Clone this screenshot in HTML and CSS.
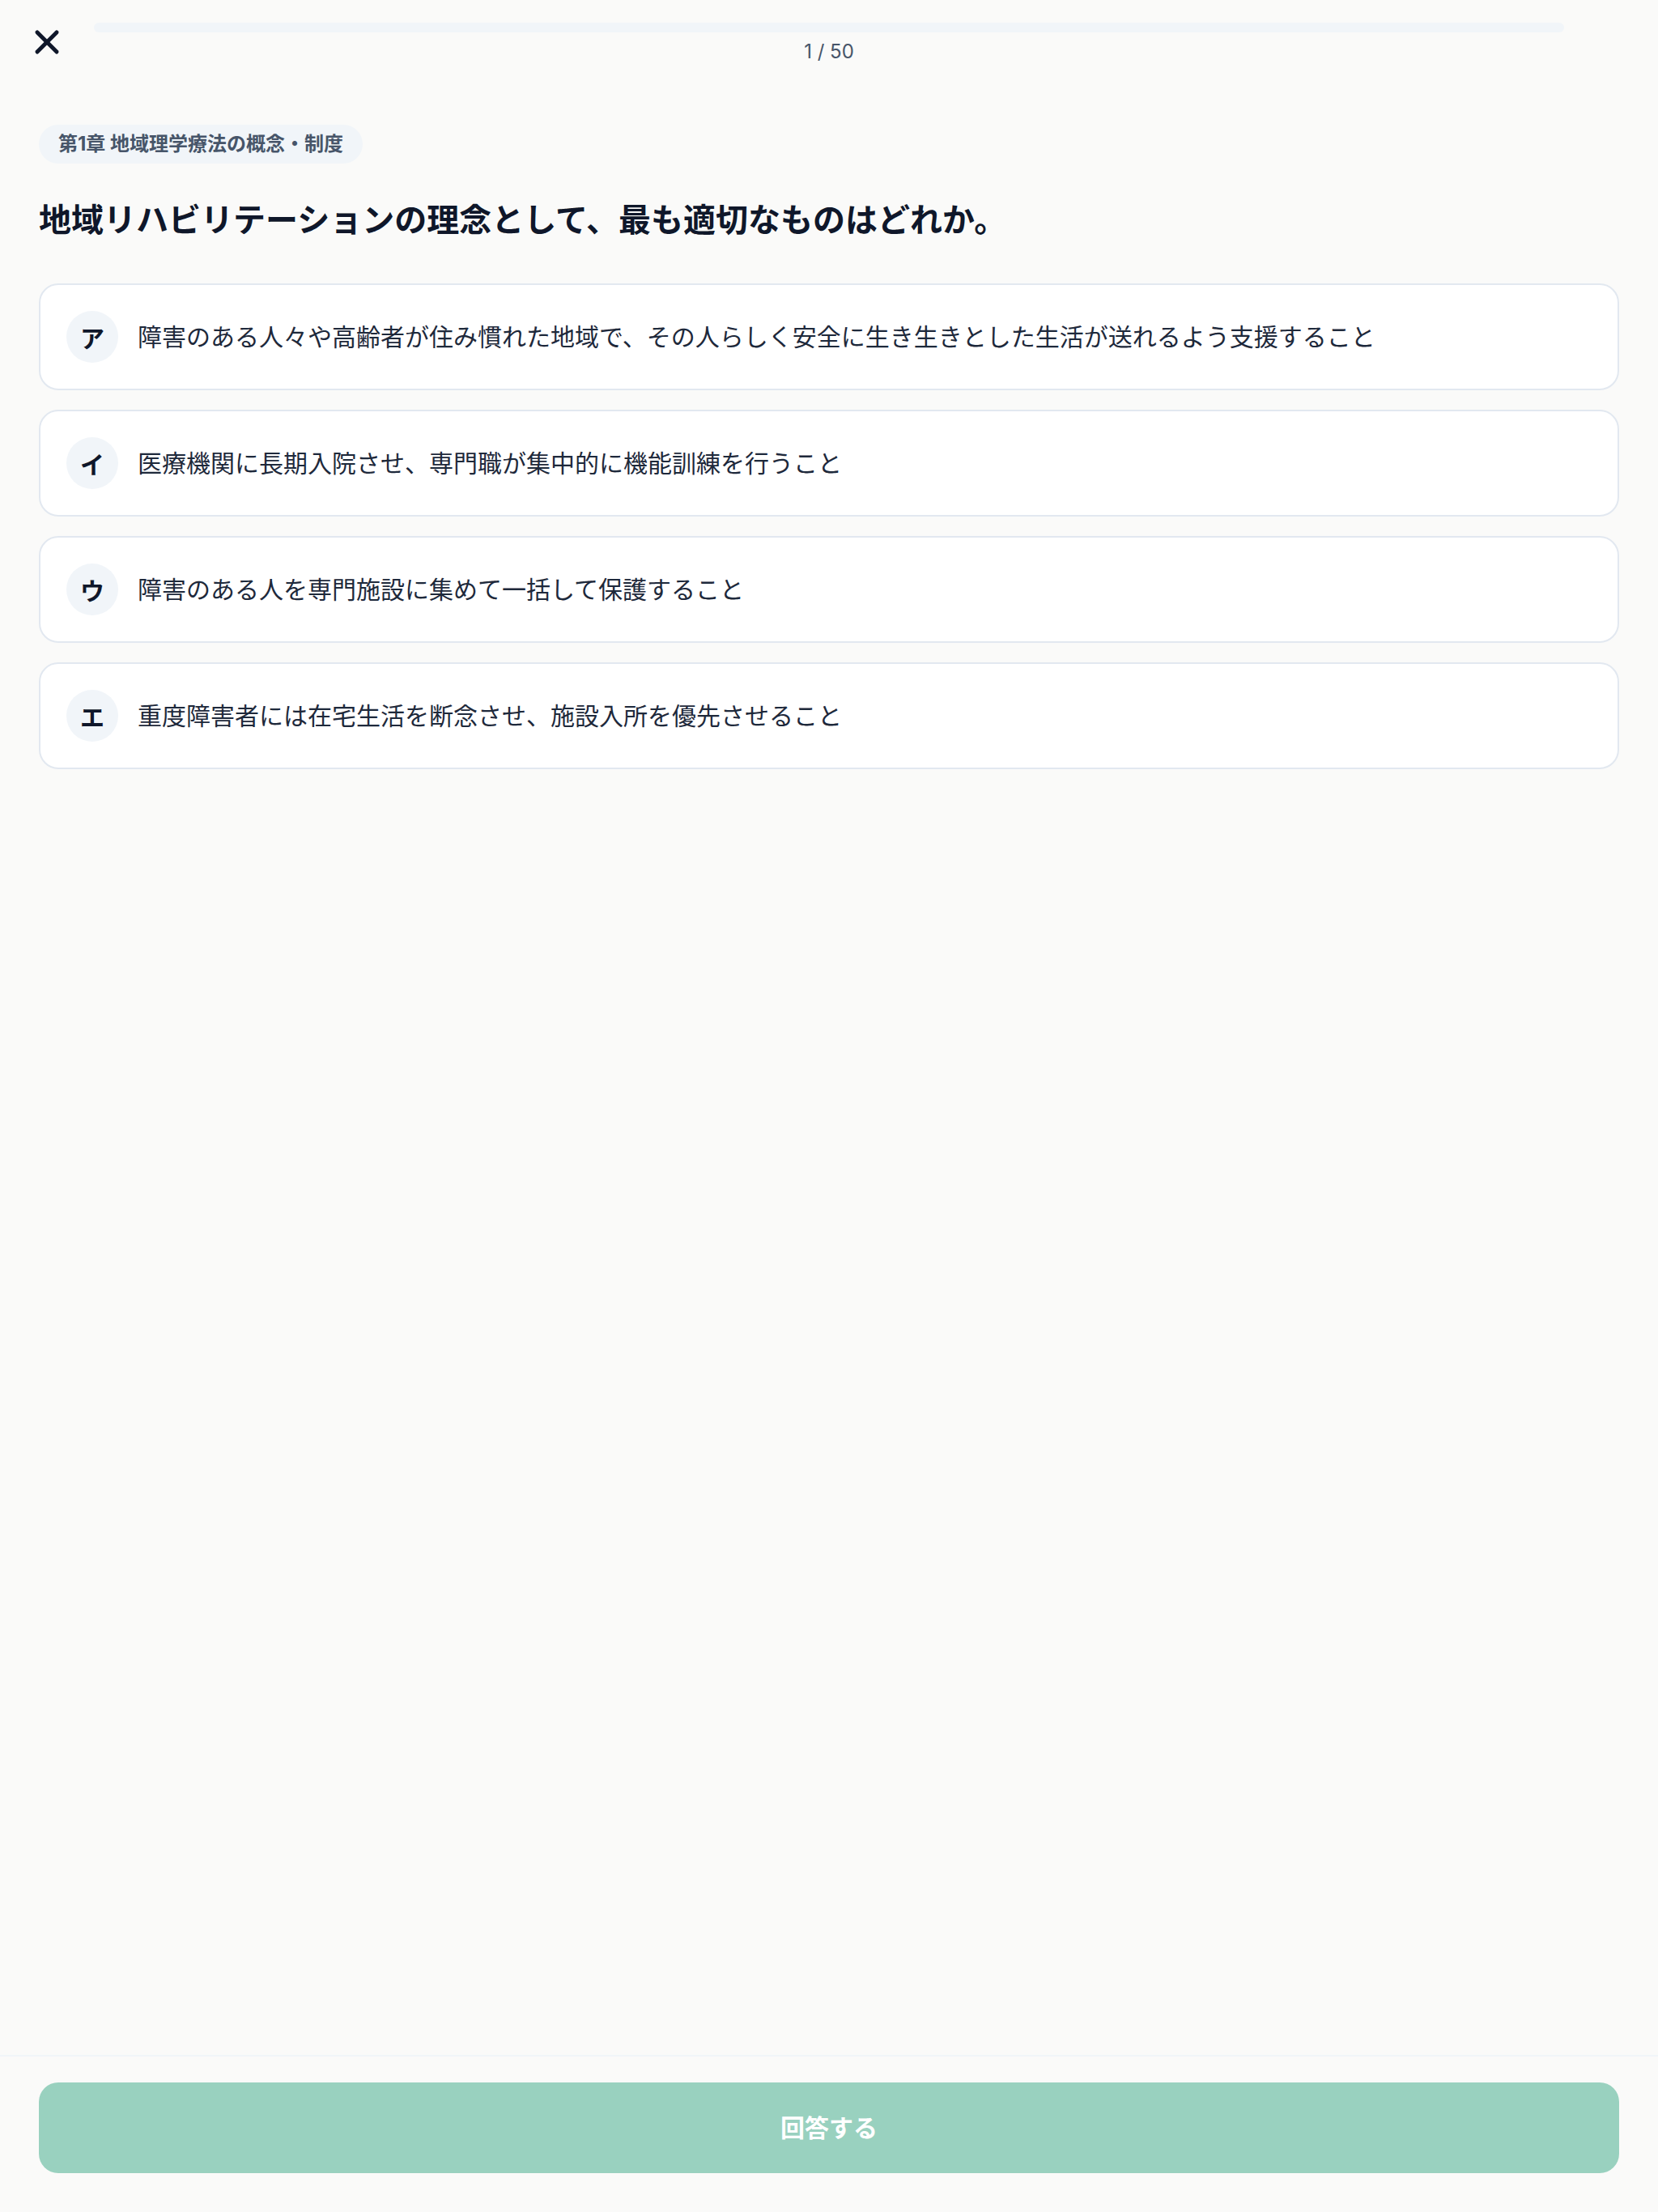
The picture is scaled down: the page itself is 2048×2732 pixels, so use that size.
FILE: index.html
```html
<!DOCTYPE html>
<html>
<head>
    <meta charset="utf-8">
    <meta name="viewport" content="width=device-width, initial-scale=1.0">
    <title>問題 1 / 50</title>
    <link rel="stylesheet" href="styles.css">
</head>
<body>
<div class="page">
    <div class="header">
        <div class="close-btn">
            <svg class="close-icon" viewBox="0 0 24 24" fill="none" stroke="currentColor" stroke-width="2.5" stroke-linecap="round" stroke-linejoin="round">
                <path d="M18 6 6 18"/>
                <path d="m6 6 12 12"/>
            </svg>
        </div>
        <div class="progress">
            <div class="progress-bar"><div class="progress-fill"></div></div>
            <div class="progress-text">1 / 50</div>
        </div>
        <div class="header-space"></div>
    </div>

    <div class="main">
        <div class="chapter">第1章 地域理学療法の概念・制度</div>
        <h1 class="question">地域リハビリテーションの理念として、最も適切なものはどれか。</h1>

        <div class="options">
            <div class="option">
                <span class="option-key">ア</span>
                <span class="option-text">障害のある人々や高齢者が住み慣れた地域で、その人らしく安全に生き生きとした生活が送れるよう支援すること</span>
            </div>
            <div class="option">
                <span class="option-key">イ</span>
                <span class="option-text">医療機関に長期入院させ、専門職が集中的に機能訓練を行うこと</span>
            </div>
            <div class="option">
                <span class="option-key">ウ</span>
                <span class="option-text">障害のある人を専門施設に集めて一括して保護すること</span>
            </div>
            <div class="option">
                <span class="option-key">エ</span>
                <span class="option-text">重度障害者には在宅生活を断念させ、施設入所を優先させること</span>
            </div>
        </div>
    </div>

    <div class="footer">
        <div class="submit-btn">回答する</div>
    </div>
</div>
</body>
</html>
```

FILE: styles.css
```css
* {
    padding: 0;
    margin: 0;
    box-sizing: border-box;
}

body {
    background-color: #fafaf9;
    color: #0f172a;
    font-family: "Inter", "Noto Sans CJK JP", sans-serif;
}

.page {
    display: flex;
    flex-direction: column;
    min-height: 2732px;
}

.header {
    display: grid;
    grid-template-columns: 68px 1fr 68px;
    column-gap: 24px;
    padding: 28px 24px 0;
}

.close-btn {
    display: flex;
    justify-content: center;
    height: 48px;
    color: #0f172a;
}

.close-icon {
    width: 48px;
    height: 48px;
}

.progress-bar {
    height: 12px;
    border-radius: 6px;
    background-color: #f1f5f9;
    overflow: hidden;
}

.progress-fill {
    width: 0;
    height: 100%;
    background-color: #059669;
}

.progress-text {
    margin-top: 8px;
    line-height: 32px;
    font-size: 24px;
    color: #475569;
    text-align: center;
}

.main {
    flex: 1;
    padding: 74px 48px 0;
}

.chapter {
    display: inline-block;
    padding: 8px 24px;
    line-height: 32px;
    font-size: 24px;
    font-weight: 700;
    color: #475569;
    background-color: #f1f5f9;
    border-radius: 24px;
}

.question {
    margin: 42px 0 50px;
    line-height: 56px;
    font-size: 40px;
    font-weight: 700;
    color: #0f172a;
}

.options {
    display: flex;
    flex-direction: column;
    gap: 24px;
}

.option {
    display: flex;
    align-items: center;
    gap: 24px;
    padding: 32px;
    background-color: #ffffff;
    border: 2px #e2e8f0 solid;
    border-radius: 24px;
}

.option-key {
    display: flex;
    align-items: center;
    justify-content: center;
    flex-shrink: 0;
    width: 64px;
    height: 64px;
    border-radius: 50%;
    background-color: #f1f5f9;
    font-size: 30px;
    font-weight: 700;
    color: #0f172a;
}

.option-text {
    line-height: 48px;
    font-size: 30px;
    color: #1e293b;
}

.footer {
    padding: 32px 48px 48px;
    border-top: 2px #f1f5f9 solid;
}

.submit-btn {
    height: 112px;
    line-height: 112px;
    border-radius: 24px;
    background-color: #99d1bf;
    color: #ffffff;
    font-size: 30px;
    font-weight: 700;
    text-align: center;
}
```
